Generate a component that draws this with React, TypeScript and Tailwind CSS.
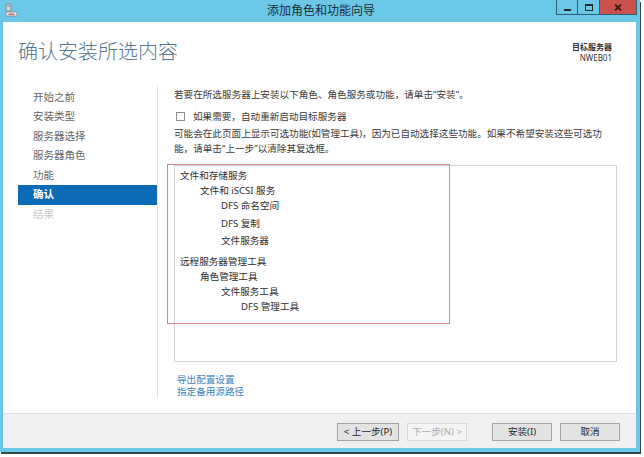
import React from "react";

const navItems = [
  { label: "开始之前", state: "done" },
  { label: "安装类型", state: "done" },
  { label: "服务器选择", state: "done" },
  { label: "服务器角色", state: "done" },
  { label: "功能", state: "done" },
  { label: "确认", state: "active" },
  { label: "结果", state: "disabled" },
];

// indent and extra top spacing per row of the confirmation list
const treeRows = [
  { text: "文件和存储服务", level: 0, extra: "" },
  { text: "文件和 iSCSI 服务", level: 1, extra: "" },
  { text: "DFS 命名空间", level: 2, extra: "" },
  { text: "DFS 复制", level: 2, extra: "mt-[3px]" },
  { text: "文件服务器", level: 2, extra: "mt-[2px]" },
  { text: "远程服务器管理工具", level: 0, extra: "mt-[6px]" },
  { text: "角色管理工具", level: 1, extra: "" },
  { text: "文件服务工具", level: 2, extra: "" },
  { text: "DFS 管理工具", level: 3, extra: "" },
];

const indent: Record<number, string> = {
  0: "pl-0",
  1: "pl-[20px]",
  2: "pl-[41px]",
  3: "pl-[61px]",
};

function WizardIcon() {
  return (
    <svg width="13" height="14" viewBox="0 0 13 14">
      <rect x="1" y="1" width="5" height="7" fill="#cfd8e0" stroke="#6d7f8e" strokeWidth="0.8" />
      <rect x="2" y="2.5" width="3" height="1" fill="#6d7f8e" />
      <path d="M1 9 L12 9 L12 13 L1 13 Z" fill="#e9edf1" stroke="#7a8896" strokeWidth="0.8" />
      <path d="M4 10.5 L9 10.5 L10 12 L3 12 Z" fill="#c06b6b" />
    </svg>
  );
}

function CaptionButtons() {
  return (
    <div className="flex h-[15px] -mr-[1px] border border-t-0 border-[#2f5f74]">
      <div className="w-[20px] bg-[#6ac8e6] flex items-end justify-center pb-[3px]">
        <div className="w-[7px] h-[2px] bg-[#1d2a30]" />
      </div>
      <div className="w-[22px] bg-[#6ac8e6] border-l border-[#2f5f74] flex items-center justify-center">
        <div className="w-[8px] h-[7px] border border-t-[2px] border-[#1d2a30]" />
      </div>
      <div className="w-[37px] bg-[#c9524d] border-l border-[#2f5f74] flex items-center justify-center">
        <svg width="8" height="7" viewBox="0 0 8 7">
          <path d="M1 0.5 L7 6.5 M7 0.5 L1 6.5" stroke="#3a1816" strokeWidth="1.8" />
        </svg>
      </div>
    </div>
  );
}

function WizardButton({ label, disabled, className }: { label: string; disabled?: boolean; className: string }) {
  return (
    <button
      className={`h-[18px] border text-[9.6px] leading-[16px] ${className} ${
        disabled
          ? "bg-[#f4f4f4] border-[#d6d6d6] text-[#ababab]"
          : "bg-[#e3e3e3] border-[#a3a3a3] text-[#1e1e1e]"
      }`}
    >
      {label}
    </button>
  );
}

export default function App() {
  return (
    <div className="w-[644px] h-[457px] bg-white overflow-hidden font-['Noto_Sans','Noto_Sans_CJK_SC',sans-serif]">
      <div className="w-[640px] h-[452px] bg-[#6ac8e6] flex flex-col pl-[3px] pr-[4px] pb-[4px] shadow-[1px_2px_0_0_#34474f]">
        {/* Title bar */}
        <div className="h-[22px] grid grid-cols-[1fr_auto_1fr] items-start">
          <div className="pl-[2px] pt-[3px]">
            <WizardIcon />
          </div>
          <div className="text-[12px] leading-[22px] text-[#1c2b33] pl-[3px]">添加角色和功能向导</div>
          <div className="flex justify-end">
            <CaptionButtons />
          </div>
        </div>

        {/* Client area */}
        <div className="flex-1 bg-white flex flex-col">
          <div className="flex-1">
            {/* Header */}
            <div className="flex justify-between pt-[18px] pl-[15px] pr-[24px]">
              <h1 className="text-[20px] leading-[24px] font-light text-[#56778d]">确认安装所选内容</h1>
              <div className="text-right text-[8px] leading-[11px] text-[#333] pt-[1px]">
                <div className="font-semibold">目标服务器</div>
                <div>NWEB01</div>
              </div>
            </div>

            {/* Body */}
            <div className="flex items-start mt-[22px]">
              <nav className="w-[155px] h-[312px] border-r border-[#e4e4e4] pl-[15px] pt-[1.5px]">
                {navItems.map((item) => (
                  <div
                    key={item.label}
                    className={`h-[19.5px] leading-[19.5px] pl-[15px] text-[10.5px] ${
                      item.state === "active"
                        ? "bg-[#0d6bb5] text-white font-semibold"
                        : item.state === "disabled"
                        ? "text-[#c9c9c9]"
                        : "text-[#666666]"
                    }`}
                  >
                    {item.label}
                  </div>
                ))}
              </nav>

              <div className="flex-1 pl-[16px] pr-[19px] pt-[1px] text-[9.6px] text-[#3a3a3a]">
                <p className="leading-[15px]">若要在所选服务器上安装以下角色、角色服务或功能，请单击“安装”。</p>

                <label className="mt-[7px] h-[15px] flex items-center gap-[8px]">
                  <span className="ml-[2px] w-[9px] h-[9px] border border-[#8c8c8c] bg-white" />
                  <span className="leading-[15px]">如果需要，自动重新启动目标服务器</span>
                </label>

                <p className="mt-[2px] leading-[15px]">
                  可能会在此页面上显示可选功能(如管理工具)，因为已自动选择这些功能。如果不希望安装这些可选功
                  <br />
                  能，请单击“上一步”以清除其复选框。
                </p>

                <div className="relative mt-[9px] h-[197px] border border-[#d3d3d3] pl-[5px] pt-[1.5px] text-[#2e2e2e]">
                  {treeRows.map((row) => (
                    <div key={row.text} className={`leading-[15px] ${indent[row.level]} ${row.extra}`}>
                      {row.text}
                    </div>
                  ))}
                  {/* red annotation frame drawn over the list */}
                  <div className="absolute -left-[8px] -top-[2px] w-[283px] h-[160px] border border-[#d9858e] pointer-events-none" />
                </div>

                <div className="mt-[12px] leading-[12px] text-[#3d84c0] pl-[3px]">
                  <div>导出配置设置</div>
                  <div>指定备用源路径</div>
                </div>
              </div>
            </div>
          </div>

          {/* Footer */}
          <div className="h-[35px] bg-[#f0f0f0] border-t border-[#e2e2e2] flex justify-end items-start pt-[9px] pr-[16px]">
            <WizardButton label="< 上一步(P)" className="w-[62px] border-[#8f8f8f]" />
            <WizardButton label="下一步(N) >" disabled className="w-[60px] ml-[8px]" />
            <WizardButton label="安装(I)" className="w-[60px] ml-[25px]" />
            <WizardButton label="取消" className="w-[60px] ml-[8px]" />
          </div>
        </div>
      </div>
    </div>
  );
}
